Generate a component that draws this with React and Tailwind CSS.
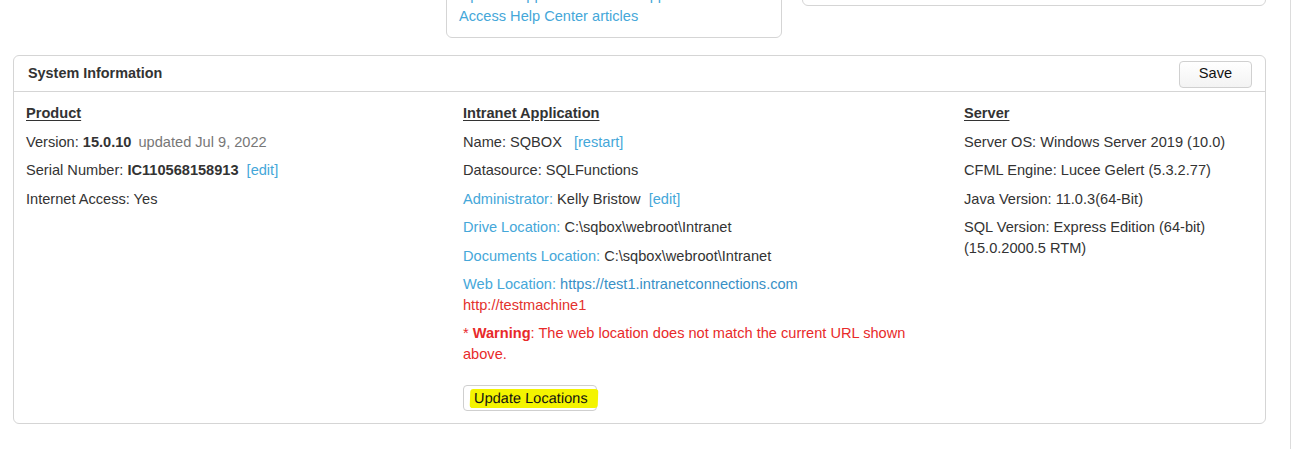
const link = "text-[#45a7d9]";

const Line = ({ children, className = "" }) => (
  <p className={`leading-[21px] mb-[7.4px] ${className}`}>{children}</p>
);

const Heading = ({ children }) => (
  <h3 className="font-bold underline underline-offset-[2px] leading-[21px] mb-[8px]">
    {children}
  </h3>
);

const App = () => {
  return (
    <div
      className="w-[1291px] h-[449px] border-r border-[#dcdcdc] bg-white text-[14.6px] text-[#333] overflow-hidden"
      style={{ fontFamily: '"Liberation Sans", Arial, sans-serif' }}
    >
      <div className="px-[13px]">
        {/* top cards, mostly scrolled out of view */}
        <div className="flex items-start h-[55px]">
          <div className="ml-[433px] w-[336px] -mt-[31px] border border-[#d5d5d5] rounded-[6px] px-[12px] pt-[15px] pb-[10px]">
            <p className={`leading-[21px] ${link}`}>Open a support ticket in the app</p>
            <p className={`leading-[21px] ${link}`}>Access Help Center articles</p>
          </div>
          <div className="ml-[20px] w-[464px] -mt-[50px] h-[56px] border border-[#d5d5d5] rounded-[6px]" />
        </div>

        {/* System Information panel */}
        <div className="w-[1253px] border border-[#d5d5d5] rounded-[6px]">
          <div className="flex items-center justify-between h-[36px] pl-[14px] pr-[13px] border-b border-[#d5d5d5]">
            <span className="font-bold text-[14.4px]">System Information</span>
            <button className="w-[73px] h-[27px] mt-[1px] border border-[#d0d0d0] rounded-[4px] bg-gradient-to-b from-white to-[#f3f3f3] text-[#111]">
              Save
            </button>
          </div>

          <div className="grid grid-cols-[437px_501px_1fr] pl-[12px] pr-[12px] pt-[11px] pb-[12px]">
            <div>
              <Heading>Product</Heading>
              <Line>
                Version: <b>15.0.10</b>
                <span className="ml-[7px] text-[#777]">updated Jul 9, 2022</span>
              </Line>
              <Line>
                Serial Number: <b>IC110568158913</b>
                <span className={`ml-[8px] ${link}`}>[edit]</span>
              </Line>
              <Line>Internet Access: Yes</Line>
            </div>

            <div className="pr-[46px]">
              <Heading>Intranet Application</Heading>
              <Line>
                Name: SQBOX
                <span className={`ml-[12px] ${link}`}>[restart]</span>
              </Line>
              <Line>Datasource: SQLFunctions</Line>
              <Line>
                <span className={link}>Administrator:</span> Kelly Bristow
                <span className={`ml-[8px] ${link}`}>[edit]</span>
              </Line>
              <Line>
                <span className={link}>Drive Location:</span> C:\sqbox\webroot\Intranet
              </Line>
              <Line>
                <span className={link}>Documents Location:</span> C:\sqbox\webroot\Intranet
              </Line>
              <Line>
                <span className={link}>Web Location: </span>
                <span className="text-[#3890c6]">https://test1.intranetconnections.com</span>
                <br />
                <span className="text-[#e3312c]">http://testmachine1</span>
              </Line>
              <Line className="text-[#e82a2a]">
                * <b>Warning</b>: The web location does not match the current URL shown above.
              </Line>
              <button className="mt-[20px] h-[26px] w-[134px] border border-[#cfcfcf] rounded-[4px] bg-white text-[#111] leading-[19px] flex items-center">
                <span className="inline-block ml-[6px] w-[128px] bg-[#f4f400] pl-[4px] pr-[6px] text-left rounded-[3px] -skew-x-2 -mr-[2px]">
                  Update Locations
                </span>
              </button>
            </div>

            <div>
              <Heading>Server</Heading>
              <Line>Server OS: Windows Server 2019 (10.0)</Line>
              <Line>CFML Engine: Lucee Gelert (5.3.2.77)</Line>
              <Line>Java Version: 11.0.3(64-Bit)</Line>
              <Line>SQL Version: Express Edition (64-bit) (15.0.2000.5 RTM)</Line>
            </div>
          </div>
        </div>
      </div>
    </div>
  );
};

export default App;
